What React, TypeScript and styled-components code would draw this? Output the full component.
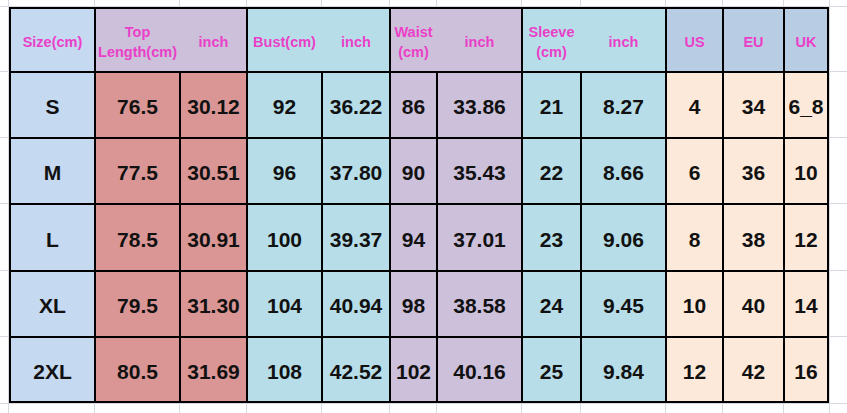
import React from 'react'
import styled, { createGlobalStyle } from 'styled-components'

const GlobalStyle = createGlobalStyle`
  html, body {
    margin: 0;
    padding: 0;
    background: #ffffff;
  }
  body {
    font-family: 'Liberation Sans', Arial, sans-serif;
  }
`

// inner widths / heights of the table cells (lines between them are 2px)
const COLS = [83, 83, 65, 73, 66, 45, 83, 57, 83, 55, 59, 42]
const ROWS = [62, 64, 64, 65, 64, 63]

const colors = {
  blue: '#c5d9f1',
  blueHead: '#b8cce4',
  salmon: '#da9694',
  aqua: '#b7dee8',
  lavender: '#ccc0da',
  peach: '#fde9d9',
  label: '#ea3fc8',
  grid: '#d6d9e0',
}

// spreadsheet tracks lined up with the table lines
const sheetCols = COLS.map((w, i) => (i === 0 ? w + 2 : i === COLS.length - 1 ? w + 3 : w + 1))
const sheetRows = ROWS.map((h, i) => (i === 0 ? h + 2 : i === ROWS.length - 1 ? h + 3 : h + 1))

const Sheet = styled.div`
  display: grid;
  height: 100vh;
  grid-template-columns: 8px ${sheetCols.map((c) => `${c}px`).join(' ')} 1fr;
  grid-template-rows: 6px ${sheetRows.map((r) => `${r}px`).join(' ')} 1fr;
  gap: 1px;
  background: ${colors.grid};
  overflow: hidden;
`

const Blank = styled.div`
  background: #ffffff;
`

const Table = styled.div`
  grid-column: 2 / 14;
  grid-row: 2 / 8;
  display: grid;
  grid-template-columns: ${COLS.map((c) => `${c}px`).join(' ')};
  grid-template-rows: ${ROWS.map((r) => `${r}px`).join(' ')};
  gap: 2px;
  padding: 2px;
  background: #000000;
`

const HeadCell = styled.div<{ $bg: string; $cols: string; $span: number }>`
  grid-column: span ${({ $span }) => $span};
  display: grid;
  grid-template-columns: ${({ $cols }) => $cols};
  column-gap: 2px;
  background: ${({ $bg }) => $bg};
`

const Label = styled.div`
  display: flex;
  align-items: center;
  justify-content: center;
  padding-top: 3px;
  text-align: center;
  font-size: 14.5px;
  line-height: 20px;
  font-weight: 700;
  color: ${colors.label};
`

const Cell = styled.div<{ $bg: string }>`
  display: flex;
  align-items: center;
  justify-content: center;
  padding-top: 4px;
  background: ${({ $bg }) => $bg};
  font-size: 21px;
  font-weight: 700;
  color: #111111;
`

type Head = { labels: React.ReactNode[]; bg: string }

const HEADS: Head[] = [
  { labels: ['Size(cm)'], bg: colors.blue },
  { labels: [<>Top<br />Length(cm)</>, 'inch'], bg: colors.lavender },
  { labels: ['Bust(cm)', 'inch'], bg: colors.aqua },
  { labels: [<>Waist<br />(cm)</>, 'inch'], bg: colors.lavender },
  { labels: [<>Sleeve<br />(cm)</>, 'inch'], bg: colors.aqua },
  { labels: ['US'], bg: colors.blueHead },
  { labels: ['EU'], bg: colors.blueHead },
  { labels: ['UK'], bg: colors.blueHead },
]

const BODY_BG = [
  colors.blue,
  colors.salmon,
  colors.salmon,
  colors.aqua,
  colors.aqua,
  colors.lavender,
  colors.lavender,
  colors.aqua,
  colors.aqua,
  colors.peach,
  colors.peach,
  colors.peach,
]

const DATA = [
  ['S', '76.5', '30.12', '92', '36.22', '86', '33.86', '21', '8.27', '4', '34', '6_8'],
  ['M', '77.5', '30.51', '96', '37.80', '90', '35.43', '22', '8.66', '6', '36', '10'],
  ['L', '78.5', '30.91', '100', '39.37', '94', '37.01', '23', '9.06', '8', '38', '12'],
  ['XL', '79.5', '31.30', '104', '40.94', '98', '38.58', '24', '9.45', '10', '40', '14'],
  ['2XL', '80.5', '31.69', '108', '42.52', '102', '40.16', '25', '9.84', '12', '42', '16'],
]

const HeaderRow = () => {
  let col = 0
  return (
    <>
      {HEADS.map((h, i) => {
        const widths = COLS.slice(col, col + h.labels.length)
        col += h.labels.length
        return (
          <HeadCell
            key={i}
            $bg={h.bg}
            $span={h.labels.length}
            $cols={widths.map((w) => `${w}px`).join(' ')}
          >
            {h.labels.map((l, j) => (
              <Label key={j}>{l}</Label>
            ))}
          </HeadCell>
        )
      })}
    </>
  )
}

const App = () => {
  const totalCols = sheetCols.length + 2
  const blanks = (n: number, prefix: string) =>
    Array.from({ length: n }, (_, i) => <Blank key={`${prefix}${i}`} />)

  return (
    <>
      <GlobalStyle />
      <Sheet>
        {blanks(totalCols, 'top')}
        <Table>
          <HeaderRow />
          {DATA.map((row) =>
            row.map((v, j) => (
              <Cell key={`${row[0]}-${j}`} $bg={BODY_BG[j]}>
                {v}
              </Cell>
            ))
          )}
        </Table>
        {blanks(ROWS.length * 2, 'side')}
        {blanks(totalCols, 'bottom')}
      </Sheet>
    </>
  )
}

export default App
